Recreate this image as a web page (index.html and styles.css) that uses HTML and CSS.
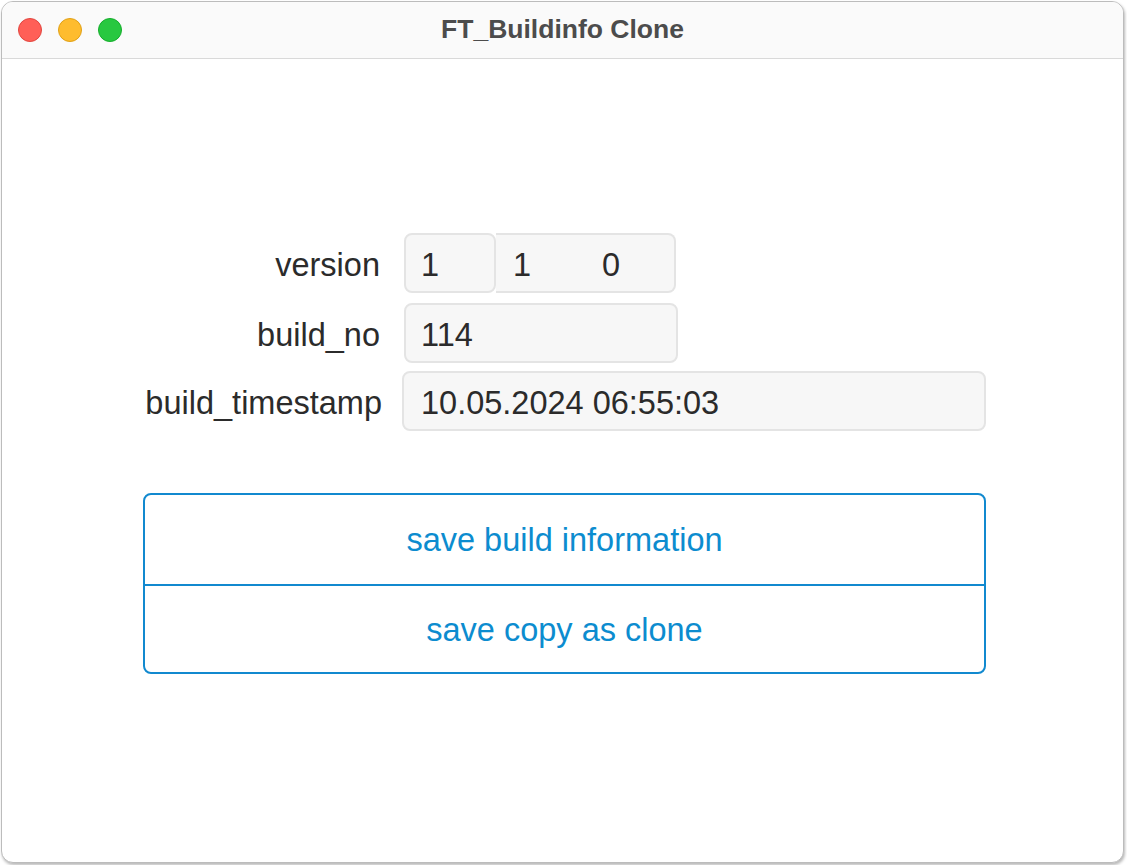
FILE: index.html
```html
<!DOCTYPE html>
<html>
<head>
<meta charset="utf-8">
<title>FT_Buildinfo Clone</title>
<link rel="stylesheet" href="styles.css">
</head>
<body>
<div class="window">
  <div class="titlebar">
    <div class="lights">
      <span class="light red"></span>
      <span class="light yellow"></span>
      <span class="light green"></span>
    </div>
    <div class="title">FT_Buildinfo Clone</div>
    <div></div>
  </div>
  <div class="content">
    <div class="form">
      <div class="row">
        <div class="label">version</div>
        <div class="fields">
          <div class="field single">1</div>
          <div class="group">
            <div class="part">1</div>
            <div class="part">0</div>
          </div>
        </div>
      </div>
      <div class="row row2">
        <div class="label">build_no</div>
        <div class="fields">
          <div class="field build">114</div>
        </div>
      </div>
      <div class="row row3">
        <div class="label wide">build_timestamp</div>
        <div class="field stamp">10.05.2024 06:55:03</div>
      </div>
    </div>
    <div class="buttons">
      <div class="btn">save build information</div>
      <div class="btn second">save copy as clone</div>
    </div>
  </div>
</div>
</body>
</html>
```
FILE: styles.css
```css
* { box-sizing: border-box; }
html, body { margin: 0; padding: 0; }
body {
  background: #ffffff;
  font-family: "Liberation Sans", Arial, sans-serif;
  width: 1127px;
  height: 865px;
  overflow: hidden;
}
.window {
  margin: 1px 0 0 1px;
  width: 1123px;
  height: 862px;
  border: 1px solid #bcbcbc;
  border-radius: 12px;
  overflow: hidden;
  background: #ffffff;
  box-shadow: 1px 2px 3px rgba(0,0,0,0.28);
}
.titlebar {
  height: 57px;
  background: #fafafa;
  border-bottom: 1px solid #d9d9d9;
  display: grid;
  grid-template-columns: 1fr auto 1fr;
  align-items: center;
}
.lights {
  display: flex;
  gap: 16px;
  padding-left: 16px;
  padding-bottom: 1px;
}
.light {
  width: 24px;
  height: 24px;
  border-radius: 50%;
  display: block;
}
.red { background: #ff5f57; border: 1px solid #e2463f; }
.yellow { background: #febc2e; border: 1px solid #e1a116; }
.green { background: #28c840; border: 1px solid #14ae2b; }
.title {
  font-weight: bold;
  font-size: 26.5px;
  color: #4c4c4c;
  padding-bottom: 1px;
}
.content {
  padding: 174px 0 0 141px;
}
.form {
  display: flex;
  flex-direction: column;
}
.row {
  display: flex;
  align-items: center;
  height: 60px;
  font-size: 32.5px;
  color: #2b2b2b;
}
.row2 { margin-top: 10px; }
.row3 { margin-top: 8px; }
.label {
  width: 237px;
  text-align: right;
  margin-right: 24px;
  padding-top: 4px;
}
.label.wide {
  width: 239px;
  margin-right: 20px;
}
.fields {
  display: flex;
  height: 60px;
}
.field {
  height: 60px;
  background: #f7f7f7;
  border: 2px solid #e4e4e4;
  border-radius: 8px;
  display: flex;
  align-items: center;
  padding-left: 15px;
  padding-top: 4px;
  color: #2b2b2b;
}
.single { width: 92px; }
.group {
  display: flex;
  height: 60px;
  width: 180px;
  background: #f7f7f7;
  border: 2px solid #e4e4e4;
  border-left: none;
  border-radius: 0 8px 8px 0;
}
.part {
  width: 90px;
  display: flex;
  align-items: center;
  padding-left: 17px;
  padding-top: 4px;
}
.build { width: 274px; }
.stamp { width: 584px; padding-left: 17px; }
.buttons {
  margin-top: 62px;
  width: 843px;
  border: 2px solid #1189cf;
  border-radius: 8px;
  display: flex;
  flex-direction: column;
}
.btn {
  height: 89px;
  display: flex;
  align-items: center;
  justify-content: center;
  font-size: 32.5px;
  color: #0c8ccf;
  padding-top: 2px;
}
.second {
  border-top: 2px solid #1189cf;
  height: 88px;
}
```
